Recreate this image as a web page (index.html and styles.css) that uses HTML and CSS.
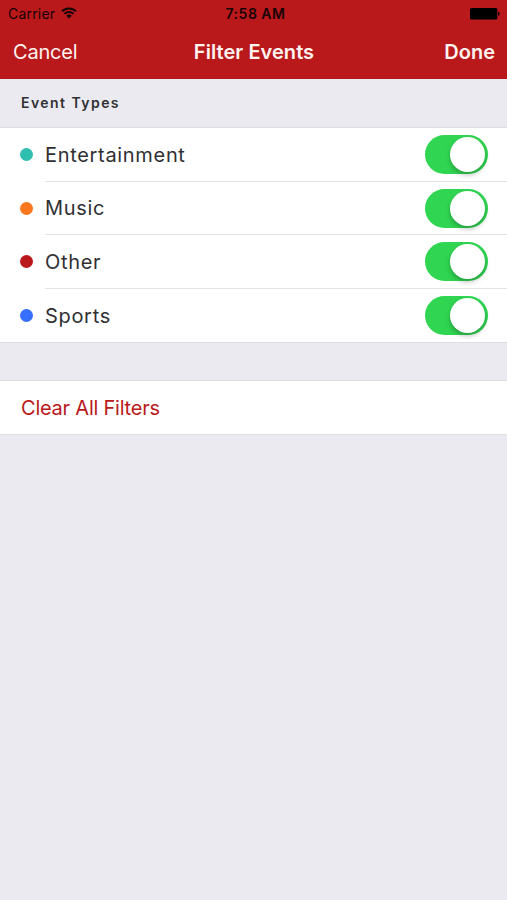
FILE: index.html
```html
<!DOCTYPE html>
<html lang="en">
<head>
<meta charset="utf-8">
<title>Filter Events</title>
<link rel="stylesheet" href="styles.css">
</head>
<body>
<header class="top">
  <div class="status">
    <div class="carrier"><span>Carrier</span>
      <svg class="wifi" width="16" height="12" viewBox="0 0 16 12" fill="none" stroke="currentColor" stroke-width="1.9"><path d="M1 4.3a10 10 0 0 1 14 0M3.4 6.9a6.6 6.6 0 0 1 9.2 0"/><path d="M8 11.6 5.2 8.8a4 4 0 0 1 5.6 0z" fill="currentColor" stroke="none"/></svg>
    </div>
    <span class="time">7:58 AM</span>
    <svg class="battery" width="30" height="12" viewBox="0 0 30 12"><rect width="27.3" height="11.4" rx="1.5"/><path d="M28 4h.6q1 .2 1 1.8t-1 1.8H28z"/></svg>
  </div>
  <nav class="nav">
    <a class="cancel">Cancel</a>
    <h1 class="title">Filter Events</h1>
    <a class="done">Done</a>
  </nav>
</header>
<main>
  <h2 class="section">Event Types</h2>
  <ul class="list">
    <li class="row"><i class="dot teal"></i><div class="cell"><span class="label">Entertainment</span><span class="switch"></span></div></li>
    <li class="row"><i class="dot orange"></i><div class="cell"><span class="label">Music</span><span class="switch"></span></div></li>
    <li class="row"><i class="dot red"></i><div class="cell"><span class="label">Other</span><span class="switch"></span></div></li>
    <li class="row"><i class="dot blue"></i><div class="cell"><span class="label">Sports</span><span class="switch"></span></div></li>
  </ul>
  <div class="clear"><span>Clear All Filters</span></div>
</main>
</body>
</html>
```

FILE: styles.css
```css
* { box-sizing: border-box; }
body { margin: 0; min-height: 900px; background: #eaeaf0; font-family: Inter, sans-serif; color: #303033; }
h1, h2, ul { margin: 0; padding: 0; }
.top { height: 79px; background: #b9191b; border-bottom: 1px solid #b31a1c; }
.status { display: grid; grid-template-columns: 1fr auto 1fr; align-items: center; height: 27px; padding: 0 7px 0 8px; color: #180304; font-size: 14px; line-height: 27px; }
.carrier { display: flex; align-items: center; gap: 6px; letter-spacing: 0.2px; }
.wifi { margin-top: -1px; }
.time { padding-left: 3px; font-weight: 600; letter-spacing: 0.5px; }
.battery { justify-self: end; fill: #000; }
.nav { display: grid; grid-template-columns: 1fr auto 1fr; height: 50px; padding: 0 12px 0 13px; color: #fff3f0; font-size: 20px; line-height: 50px; }
.cancel { letter-spacing: -0.2px; }
.title { font-size: 20px; font-weight: 600; letter-spacing: 0.05px; }
.done { justify-self: end; font-weight: 600; letter-spacing: 0; }
.section { height: 48px; padding-left: 21px; font-size: 14px; font-weight: 600; line-height: 48px; letter-spacing: 1.45px; }
.list { height: 216px; list-style: none; background: #fff; border-top: 1px solid #dedee2; border-bottom: 1px solid #dedee2; display: grid; grid-template-rows: repeat(4, 1fr); }
.row { display: flex; align-items: center; padding-left: 20px; }
.dot { width: 13px; height: 13px; border-radius: 50%; margin-right: 12px; }
.teal { background: #30beb0; }
.orange { background: #fb771e; }
.red { background: #b9191b; }
.blue { background: #376fff; }
.cell { flex: 1; height: 100%; display: flex; align-items: center; justify-content: space-between; padding-right: 19px; border-bottom: 1px solid #e3e3e6; font-size: 20px; letter-spacing: 0.68px; }
.row:last-child .cell { border-bottom: 0; }
.label { padding-top: 1px; }
.switch { width: 63px; height: 39px; margin-top: 1px; padding: 2px 3px; border-radius: 20px; background: #30d552; display: flex; justify-content: flex-end; }
.switch::after { content: ""; width: 35px; height: 35px; border-radius: 50%; background: #fff; box-shadow: 0 3px 5px rgba(0,0,0,.25); }
.clear { height: 55px; margin-top: 37px; padding-left: 21px; background: #fff; border-top: 1px solid #dedee2; border-bottom: 1px solid #dedee2; color: #b9191b; font-size: 20px; line-height: 54px; letter-spacing: -0.23px; }
```
